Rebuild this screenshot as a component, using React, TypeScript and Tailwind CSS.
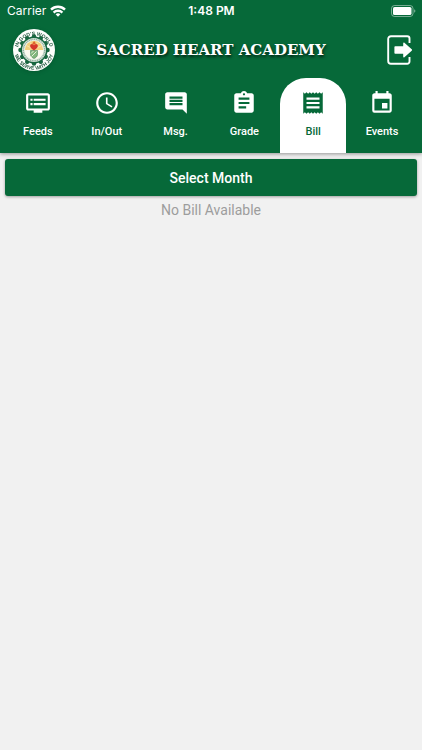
import { useState } from "react";
import {
  MdAccessTime,
  MdAssignment,
  MdComment,
  MdDvr,
  MdEvent,
  MdReceipt,
} from "react-icons/md";

const tabs = [
  { name: "Feeds", Icon: MdDvr },
  { name: "In/Out", Icon: MdAccessTime },
  { name: "Msg.", Icon: MdComment },
  { name: "Grade", Icon: MdAssignment },
  { name: "Bill", Icon: MdReceipt },
  { name: "Events", Icon: MdEvent },
];

function WifiIcon() {
  return (
    <svg viewBox="0 0 16 12" className="h-3 w-4" fill="none" stroke="white" strokeWidth="2.4" aria-hidden="true">
      <path d="M1 4.6a10 10 0 0 1 14 0" />
      <path d="M3.6 7.6a6.3 6.3 0 0 1 8.8 0" />
      <path d="M8 11.8 5.6 9.3a3.5 3.5 0 0 1 4.8 0z" fill="white" stroke="none" />
    </svg>
  );
}

function BatteryIcon() {
  return (
    <svg viewBox="0 0 25 12" className="h-3 w-[25px]" aria-hidden="true">
      <rect x="0.5" y="0.5" width="21.5" height="11" rx="3" fill="none" stroke="white" strokeOpacity="0.45" />
      <rect x="2" y="2" width="18.5" height="8" rx="1.6" fill="white" />
      <path d="M23.2 4.2c1.6.6 1.6 3 0 3.6z" fill="white" fillOpacity="0.5" />
    </svg>
  );
}

const petals = Array.from({ length: 12 }, (_, i) => i * 30);

function SchoolSeal() {
  return (
    <svg viewBox="0 0 84 84" className="size-[42px] drop-shadow-sm" role="img" aria-label="School seal">
      <defs>
        <path id="seal-top" d="M8.5 46a33.5 33.5 0 1 1 67 0" />
        <path id="seal-bottom" d="M2.5 42a39.5 39.5 0 0 0 79 0" />
      </defs>
      <circle cx="42" cy="42" r="42" fill="#fdfefc" />
      <g fill="#17663f">
        <circle cx="42" cy="42" r="27" />
        {petals.map((a) => (
          <circle key={a} cx="42" cy="15" r="4.5" transform={`rotate(${a} 42 42)`} />
        ))}
      </g>
      <circle cx="42" cy="42" r="24" fill="#dfe9e0" />
      <circle cx="42" cy="42" r="21.5" fill="none" stroke="#8fb09d" strokeWidth="3" strokeDasharray="2.2 1.4" />
      <circle cx="42" cy="42" r="19" fill="#fbfaf0" />
      <path d="M23.5 42a18.5 18.5 0 0 1 37 0z" fill="#f3cf7c" />
      <path d="M42 41 27 33M42 41l-8-14M42 41l8-14M42 41l15-8" stroke="#fbe9b8" strokeWidth="1.5" />
      <path d="M35 43h14v8c0 4-4 7-7 8-3-1-7-4-7-8z" fill="#82b77d" stroke="#37774b" />
      <path d="m37 55 10-10M36 49l5-5" stroke="#e6f1dc" strokeWidth="2" />
      <path d="M42 43c-10-6-9-13-4-13 2 0 4 2 4 3 0-1 2-3 4-3 5 0 6 7-4 13z" fill="#d5362b" />
      <path d="M39 31c-1-4 2-4 3-7 3 3 4 5 3 7z" fill="#e0642d" />
      <g fill="#265c43" fontFamily="Liberation Sans, sans-serif" fontSize="10" fontWeight="700">
        <text textAnchor="middle"><textPath href="#seal-top" startOffset="50%">IN GOD'S WORLD</textPath></text>
        <text textAnchor="middle"><textPath href="#seal-bottom" startOffset="50%">WE SERVE WITH JOY</textPath></text>
      </g>
    </svg>
  );
}

function LogoutIcon() {
  return (
    <svg viewBox="0 0 26 30" className="h-[30px] w-[26px]" aria-hidden="true">
      <path d="M22.5 8V3.5a2.3 2.3 0 0 0-2.3-2.3H4a2.8 2.8 0 0 0-2.8 2.8v22A2.8 2.8 0 0 0 4 28.8h16.2a2.3 2.3 0 0 0 2.3-2.3V22" fill="none" stroke="white" strokeWidth="1.9" />
      <path d="M8.2 11.2h8V8.2c0-.7.7-.9 1.2-.5l7.3 6.6c.5.4.5 1 0 1.4l-7.3 6.6c-.5.4-1.2.2-1.2-.5v-3h-8c-.5 0-.8-.3-.8-.8v-6c0-.5.3-.8.8-.8z" fill="white" />
    </svg>
  );
}

export default function App() {
  const [active, setActive] = useState("Bill");

  return (
    <div className="min-h-screen bg-[#f1f1f1] font-['Roboto',sans-serif]">
      <header className="bg-[#066939] text-white shadow-[0_1px_4px_rgba(0,0,0,0.4)]">
        <div className="grid h-[22px] grid-cols-3 items-center pr-1.5 pl-[7px] font-['Inter',sans-serif] text-xs">
          <div className="flex items-center gap-1">
            <span>Carrier</span>
            <WifiIcon />
          </div>
          <span className="text-center font-semibold">1:48 PM</span>
          <div className="flex justify-end">
            <BatteryIcon />
          </div>
        </div>
        <div className="grid h-14 grid-cols-[1fr_auto_1fr] items-center pr-[9px] pl-[13px]">
          <SchoolSeal />
          <h1 className="pr-1 font-['DejaVu_Serif',serif] text-[15px] font-bold whitespace-nowrap [text-shadow:1px_2px_3px_rgba(0,0,0,0.7)]">
            SACRED HEART ACADEMY
          </h1>
          <button type="button" aria-label="Log out" className="justify-self-end">
            <LogoutIcon />
          </button>
        </div>
        <nav className="flex h-[75px] gap-[3px] pr-[7px] pl-[5px]">
          {tabs.map(({ name, Icon }) => (
            <button
              key={name}
              type="button"
              onClick={() => setActive(name)}
              aria-current={active === name ? "page" : undefined}
              className={`flex flex-1 basis-0 flex-col items-center gap-2 rounded-t-[26px] pt-3 text-[11px] leading-4 font-medium ${
                active === name ? "bg-white text-[#066939]" : "text-white"
              }`}
            >
              <Icon className="size-[26px]" />
              {name}
            </button>
          ))}
        </nav>
      </header>
      <main className="px-[5px] pt-1.5 text-center">
        <button
          type="button"
          className="h-[37px] w-full rounded-[3px] bg-[#066939] text-sm font-medium text-white shadow-[0_1px_3px_rgba(0,0,0,0.35)]"
        >
          Select Month
        </button>
        <p className="mt-1 text-sm text-[#9d9d9d]">No Bill Available</p>
      </main>
    </div>
  );
}
